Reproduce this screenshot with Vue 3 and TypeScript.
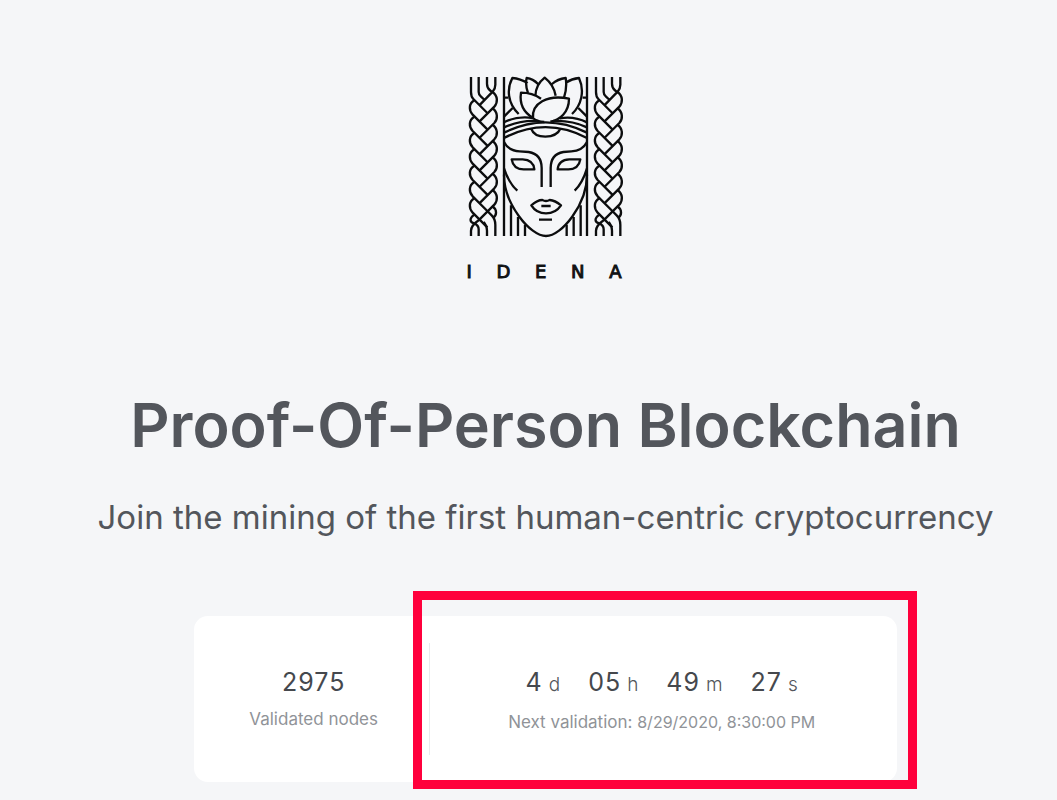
<script setup lang="ts">
interface TimePart {
  value: string
  unit: string
}

const brand: string[] = ['I', 'D', 'E', 'N', 'A']
const countdown: TimePart[] = [
  { value: '4', unit: 'd' },
  { value: '05', unit: 'h' },
  { value: '49', unit: 'm' },
  { value: '27', unit: 's' },
]

const plaitStep = 49
const plaitOffsets: number[] = [0, 1, 2, 3, 4, 5, 6].map((i) => i * plaitStep)
const braidOrigins: number[] = [-8, 367]
</script>

<template>
  <main class="page">
    <header class="brand">
      <svg class="emblem" viewBox="0 0 474 492" role="img" aria-label="Idena emblem">
        <g v-for="x in braidOrigins" :key="x" :transform="`translate(${x} -9)`">
          <path d="M20 15V60Q20 74 27 81L69 123M43 15V60Q43 68 50 74L61 84M68 15V35Q68 47 76 54L84 61M93 15V38Q93 50 85 59L45 100" />
          <g v-for="y in plaitOffsets" :key="y" :transform="`translate(0 ${y})`">
            <path d="M30 85C13 95 13 115 25 128L69 172" />
            <path d="M84 60C101 71 101 92 90 104L45 149" />
          </g>
          <path d="M69 417L82 430Q93 441 93 458V492M58 450Q68 462 68 476V492M30 428C14 440 16 450 29 454Q43 459 43 472V492M45 443Q20 460 20 476V492M84 403C100 414 97 431 86 437" />
        </g>
        <g transform="translate(102 -9)">
          <path d="M9 15V492M258 15V492" />
          <path d="M53 126C19 93 17 50 34 18Q58 20 80 33M81 63Q72 38 77 18Q96 20 111 36M103 72Q104 38 131 17Q158 38 164 71M153 36Q170 21 194 18Q199 45 189 77M194 32Q213 20 234 18C252 57 241 100 213 126" />
          <path d="M96 138C63 118 56 88 60 62Q94 62 120 80M96 138C92 94 138 67 204 80C204 121 176 144 148 149M96 138Q107 149 130 150" />
          <path d="M9 77H22M245 77H258M9 134L35 108M258 134L232 108" />
          <path d="M9 151Q48 131 96 138M9 166Q60 143 112 147M176 139Q218 131 258 151M156 147Q210 144 258 166M9 182Q134 120 258 182M9 198Q134 133 258 198M90 169Q99 194 133 194Q168 194 179 169" />
        </g>
        <g transform="translate(102 201)">
          <path d="M9 0Q23 27 56 28L83 30Q122 37 122 78V135M258 0Q244 27 211 28L187 30Q149 37 149 78V135" />
          <path d="M32 52H65Q97 53 100 82H68Q37 82 32 52ZM238 52H205Q173 53 170 82H202Q233 82 238 52Z" />
          <path d="M9 79Q24 124 49 146M258 79Q244 124 221 146M9 98C9 187 88 282 135 282S258 187 258 98" />
          <path d="M91 190Q109 174 124 174Q135 180 146 174Q162 175 180 190Q164 214 135 214T91 190ZM121 192H149M114 233H153" />
          <path d="M30 190V282M51 225V282M72 248V282M197 248V282M218 225V282M239 190V282" />
        </g>
      </svg>
      <div class="wordmark">
        <span v-for="letter in brand" :key="letter">{{ letter }}</span>
      </div>
    </header>

    <h1>Proof-Of-Person Blockchain</h1>
    <p class="lead">Join the mining of the first human-centric cryptocurrency</p>

    <section class="card">
      <div class="stat nodes">
        <div class="number">2975</div>
        <div class="caption">Validated nodes</div>
      </div>
      <div class="stat validation">
        <div class="countdown">
          <div v-for="part in countdown" :key="part.unit" class="part">
            <span class="number">{{ part.value }}</span>
            <span class="unit">{{ part.unit }}</span>
          </div>
        </div>
        <div class="caption next">Next validation: <time>8/29/2020, 8:30:00 PM</time></div>
        <div class="highlight"></div>
      </div>
    </section>
  </main>
</template>

<style>
body {
  background: #f5f6f8;
}
</style>

<style scoped>
.page {
  display: flex;
  flex-direction: column;
  align-items: center;
  min-height: 100vh;
  box-sizing: border-box;
  padding: 75px 0 18px 34px;
  background: #f5f6f8;
  color: #53565c;
  font-family: Inter, "Liberation Sans", sans-serif;
  overflow: hidden;
}

.brand {
  width: 158px;
}

.emblem {
  display: block;
  width: 100%;
  fill: none;
  stroke: #0c0d0e;
  stroke-width: 7;
  stroke-linejoin: round;
}

.wordmark {
  display: flex;
  justify-content: space-between;
  margin-top: 21px;
  padding-right: 3px;
  color: #101214;
  font-family: "DejaVu Sans", sans-serif;
  font-size: 18px;
  -webkit-text-stroke: 1px #101214;
  line-height: 24px;
}

h1 {
  margin: 104px 0 0;
  color: #53565c;
  font-size: 61px;
  font-weight: 600;
  line-height: 74px;
  white-space: nowrap;
}

.lead {
  margin: 35px 0 0;
  font-size: 33px;
  line-height: 40px;
  white-space: nowrap;
}

.card {
  display: flex;
  align-items: center;
  width: 100%;
  max-width: 703px;
  margin-top: 79px;
  border-radius: 14px;
  background: #fff;
  padding: 27px 0;
  box-sizing: border-box;
}

.stat {
  display: flex;
  flex-direction: column;
  align-items: center;
  box-sizing: border-box;
  height: 112px;
  padding-top: 23px;
}

.nodes {
  flex: 1;
  padding-left: 4px;
}

.validation {
  position: relative;
  flex: 2;
  padding-right: 4px;
  border-left: 1px solid #e8eaed;
}

.number {
  color: #45484d;
  font-size: 25px;
  line-height: 32px;
  letter-spacing: 1px;
}

.countdown {
  display: flex;
  gap: 28px;
}

.part {
  display: flex;
  align-items: baseline;
  gap: 6px;
}

.unit {
  font-size: 19px;
  font-weight: 300;
}

.caption {
  margin-top: 11px;
  color: #909398;
  font-size: 17px;
  line-height: 20px;
}

.next {
  margin-top: 14px;
}

.next time {
  font-size: 16px;
}

.highlight {
  position: absolute;
  inset: -52px -20px -34px -17px;
  border: 9px solid #ff003c;
  pointer-events: none;
}
</style>
